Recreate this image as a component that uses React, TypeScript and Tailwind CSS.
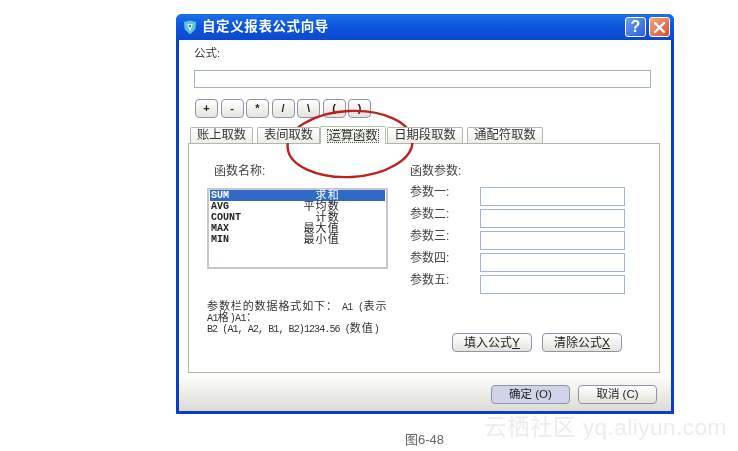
import React from 'react';

const CJK = "font-['Liberation_Sans','Noto_Sans_CJK_SC',sans-serif]";
const MONO = "font-['Liberation_Mono','Noto_Sans_CJK_SC',monospace]";

const opButtons = ['+', '-', '*', '/', '\\', '(', ')'];
const tabs = [
  { label: '账上取数', box: 'w-[63px] mr-[4px]' },
  { label: '表间取数', box: 'w-[63px]' },
  { label: '运算函数', box: 'w-[66px] mr-[1px]' },
  { label: '日期段取数', box: 'w-[76px] mr-[4px]' },
  { label: '通配符取数', box: 'w-[76px]' },
];
const funcs = [
  ['SUM', '求和'],
  ['AVG', '平均数'],
  ['COUNT', '计数'],
  ['MAX', '最大值'],
  ['MIN', '最小值'],
];
const params = ['参数一:', '参数二:', '参数三:', '参数四:', '参数五:'];

const XpButton = ({ className, children }: { className: string; children: React.ReactNode }) => (
  <button className={`flex items-center justify-center rounded-[4px] border border-[#8f93a8] bg-gradient-to-b from-white to-[#e4e3dc] text-[#222] ${className}`}>
    {children}
  </button>
);

export default function App() {
  return (
    <div className={`relative w-[738px] h-[451px] overflow-hidden bg-white pl-[176px] pt-[14px] ${CJK} blur-[0.35px]`}>
      {/* WINDOW */}
      <div className="w-[498px] h-[400px] flex flex-col rounded-t-[6px] bg-[#0a3fc4] px-[3px] pb-[3px]">
        {/* TITLE BAR */}
        <div className="h-[26px] -mx-[3px] pl-[7px] pr-[4px] rounded-t-[6px] flex items-center bg-gradient-to-b from-[#1f6fe8] via-[#0c55dd] to-[#0a49cf]">
          <svg width="14" height="15" viewBox="0 0 14 15" className="mr-[5px]">
            <path d="M1 2 L7 0.5 L13 2 L12.5 9 L7 14.5 L1.5 9 Z" fill="#5fc4dc" />
            <path d="M4.5 4 H9.5 L8.5 8 L7 11 L5.5 8 Z" fill="#f2fbff" />
            <circle cx="7" cy="6" r="1.2" fill="#2a7fa8" />
          </svg>
          <span className="text-[13.5px] font-bold text-white tracking-[0.6px]">自定义报表公式向导</span>
          <div className="ml-auto flex gap-[3px]">
            <div className="w-[21px] h-[20px] rounded-[3px] border border-white bg-gradient-to-br from-[#6f9cf0] to-[#2a5fd8] flex items-center justify-center text-white text-[16px] font-bold">?</div>
            <div className="w-[21px] h-[20px] rounded-[3px] border border-white bg-gradient-to-br from-[#eea585] to-[#d2502a] flex items-center justify-center">
              <svg width="13" height="13" viewBox="0 0 13 13">
                <path d="M2 2 L11 11 M11 2 L2 11" stroke="#fff" strokeWidth="2.4" strokeLinecap="round" />
              </svg>
            </div>
          </div>
        </div>

        {/* CLIENT AREA */}
        <div className="flex-1 flex flex-col bg-white">
          <div className="h-[30px] pl-[15px] pt-[5px] text-[11.5px] leading-[16px] text-[#333]">公式:</div>
          <div className="ml-[15px] w-[457px] h-[18px] border border-[#9fb2cf] bg-white" />

          <div className="mt-[11px] ml-[16px] flex gap-[2.5px]">
            {opButtons.map((op) => (
              <XpButton key={op} className="w-[23px] h-[19px] text-[11px] font-semibold">
                {op}
              </XpButton>
            ))}
          </div>

          {/* TABS */}
          <div className="mt-[7px] ml-[11px] h-[18px] flex items-end z-10">
            {tabs.map((tab) => {
              const isActive = tab.label === '运算函数';
              return (
                <div
                  key={tab.label}
                  className={`flex items-center justify-center text-[12.3px] text-[#333] border border-b-0 rounded-t-[2px] ${tab.box} ${
                    isActive
                      ? 'h-[18px] border-[#a9c7a0] border-t-[#a5c79a] bg-white -mb-px'
                      : 'h-[16px] border-[#b7b7ae] bg-gradient-to-b from-white to-[#eeeee8]'
                  }`}
                >
                  {isActive ? <span className="border border-dotted border-[#555] bg-[#f0f6ea] leading-[12px]">{tab.label}</span> : tab.label}
                </div>
              );
            })}
          </div>

          {/* TAB PANEL */}
          <div className="ml-[9px] w-[472px] h-[230px] border border-[#b5b5ae] bg-white flex pt-[20px]">
            <div className="w-[221px] pl-[18px] flex flex-col">
              <div className="pl-[7px] text-[12px] leading-[14px] text-[#444]">函数名称:</div>
              <div className="mt-[10px] w-[181px] h-[81px] border-2 border-[#c3c7cf] pl-px pr-px">
                {funcs.map(([code, name], i) => (
                  <div key={code} className={`h-[11px] flex items-center text-[10px] ${i === 0 ? 'bg-[#316ac5] text-white' : 'text-[#222]'}`}>
                    <span className={`${MONO} w-[75px] pl-px font-bold leading-[11px]`}>{code}</span>
                    <span className="w-[55px] text-right text-[11px] leading-[11px] tracking-[1.2px]">{name}</span>
                  </div>
                ))}
              </div>
              <div className="mt-[32px] w-[190px] whitespace-nowrap text-[11px] tracking-[0.9px] text-[#333]">
                <div className="h-[11px] flex items-baseline leading-[11px]">
                  <span>参数栏的数据格式如下：</span>
                  <span className={`${MONO} ml-[4px] text-[10px] tracking-[-0.6px]`}>A1 (</span>
                  <span>表示</span>
                </div>
                <div className="h-[11px] flex items-baseline leading-[11px]">
                  <span className={`${MONO} text-[10px] tracking-[-0.6px]`}>A1</span>
                  <span>格</span>
                  <span className={`${MONO} text-[10px] tracking-[-0.6px]`}>)A1</span>
                  <span>：</span>
                </div>
                <div className="h-[11px] flex items-baseline leading-[11px]">
                  <span className={`${MONO} text-[10px] tracking-[-0.9px]`}>B2 (A1, A2, B1, B2)1234.56 (</span>
                  <span>数值</span>
                  <span className={`${MONO} text-[10px]`}>)</span>
                </div>
              </div>
            </div>

            <div className="flex-1 flex flex-col">
              <div className="text-[12px] leading-[14px] text-[#444]">函数参数:</div>
              <div className="mt-[9px] flex flex-col gap-[3px]">
                {params.map((p) => (
                  <div key={p} className="flex items-start h-[19px] text-[12px] leading-[11px] text-[#444]">
                    <span className="w-[70px]">{p}</span>
                    <div className="w-[145px] h-[19px] border border-[#9fb2cf] bg-white" />
                  </div>
                ))}
              </div>
              <div className="mt-[39px] ml-[42px] flex gap-[10px]">
                <XpButton className="w-[80px] h-[19px] text-[12px]">
                  填入公式<span className="underline">Y</span>
                </XpButton>
                <XpButton className="w-[80px] h-[19px] text-[12px]">
                  清除公式<span className="underline">X</span>
                </XpButton>
              </div>
            </div>
          </div>

          {/* FOOTER */}
          <div className="flex-1 mt-[1px] bg-gradient-to-b from-white to-[#dcdbd3] flex justify-end gap-[8px] pt-[11px] pr-[14px]">
            <XpButton className="w-[79px] h-[19px] text-[11.5px] border-[#7f86a8] !bg-none bg-[#cfd4ea]">确定 (O)</XpButton>
            <XpButton className="w-[79px] h-[19px] text-[11.5px]">取消 (C)</XpButton>
          </div>
        </div>
      </div>

      {/* RED CIRCLE ANNOTATION */}
      <svg className="absolute left-[280px] top-[104px]" width="140" height="82" viewBox="0 0 140 82" fill="none">
        <ellipse cx="70" cy="40" rx="62.5" ry="33" transform="rotate(-3 70 40)" stroke="#bd2020" strokeWidth="2.4" />
      </svg>

      {/* CAPTION + WATERMARK */}
      <div className="absolute left-[405px] top-[432px] text-[13px] leading-[16px] text-[#666]">图6-48</div>
      <div className="absolute left-[484px] top-[414px] text-[22.5px] leading-[28px] text-[#ececec] tracking-[0.5px] whitespace-nowrap">云栖社区 yq.aliyun.com</div>
    </div>
  );
}
